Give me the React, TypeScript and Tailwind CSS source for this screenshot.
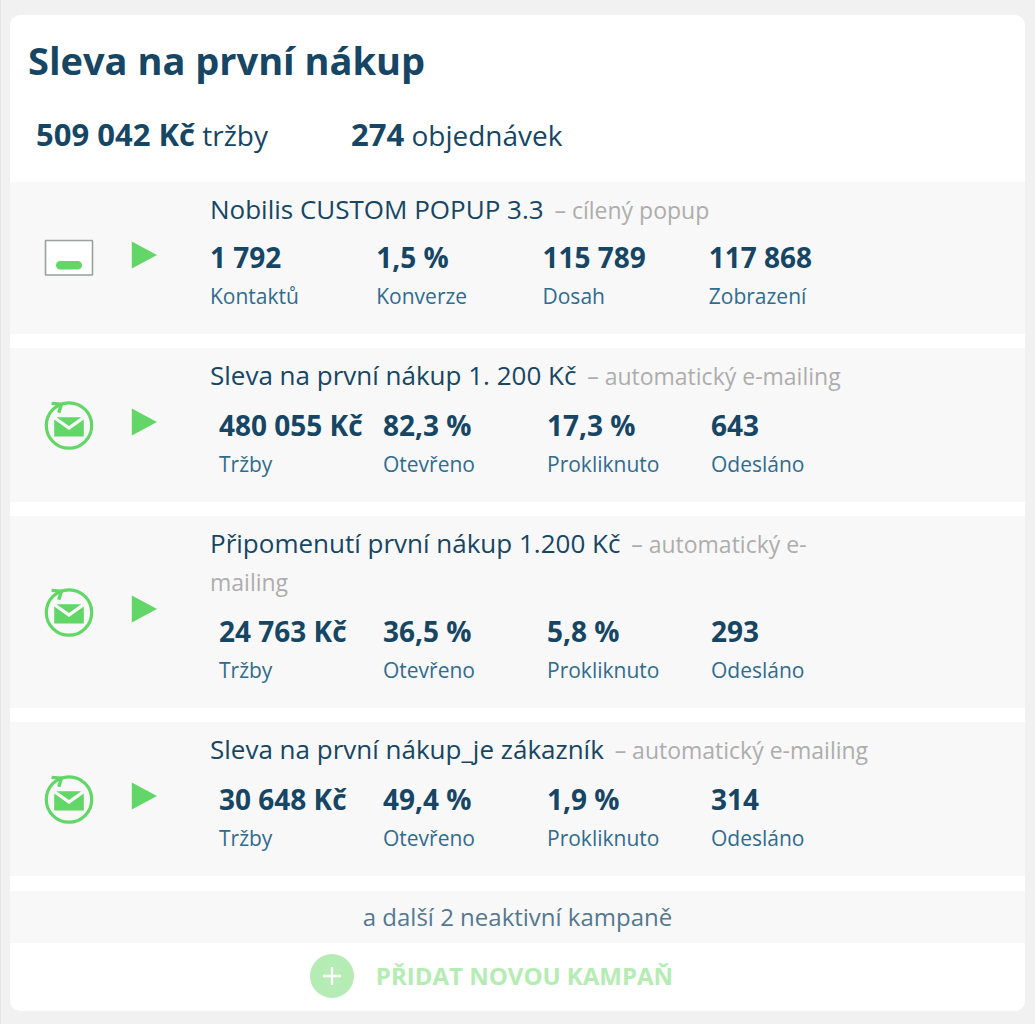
type CampaignType = "popup" | "email"

interface Stat {
  value: string
  label: string
}

interface Campaign {
  name: string
  kind: string
  type: CampaignType
  stats: Stat[]
}

const campaigns: Campaign[] = [
  {
    name: "Nobilis CUSTOM POPUP 3.3",
    kind: "cílený popup",
    type: "popup",
    stats: [
      { value: "1 792", label: "Kontaktů" },
      { value: "1,5 %", label: "Konverze" },
      { value: "115 789", label: "Dosah" },
      { value: "117 868", label: "Zobrazení" }
    ]
  },
  {
    name: "Sleva na první nákup 1. 200 Kč",
    kind: "automatický e-mailing",
    type: "email",
    stats: [
      { value: "480 055 Kč", label: "Tržby" },
      { value: "82,3 %", label: "Otevřeno" },
      { value: "17,3 %", label: "Prokliknuto" },
      { value: "643", label: "Odesláno" }
    ]
  },
  {
    name: "Připomenutí první nákup 1.200 Kč",
    kind: "automatický e-mailing",
    type: "email",
    stats: [
      { value: "24 763 Kč", label: "Tržby" },
      { value: "36,5 %", label: "Otevřeno" },
      { value: "5,8 %", label: "Prokliknuto" },
      { value: "293", label: "Odesláno" }
    ]
  },
  {
    name: "Sleva na první nákup_je zákazník",
    kind: "automatický e-mailing",
    type: "email",
    stats: [
      { value: "30 648 Kč", label: "Tržby" },
      { value: "49,4 %", label: "Otevřeno" },
      { value: "1,9 %", label: "Prokliknuto" },
      { value: "314", label: "Odesláno" }
    ]
  }
]

function PopupIcon() {
  return (
    <svg viewBox="0 0 50 38" className="w-[50px] h-[38px]" aria-hidden="true">
      <rect x="1.5" y="1.5" width="47" height="34.5" rx="0.5" fill="#fff" stroke="#9b9fa0" strokeWidth="1.6" />
      <rect x="12" y="22" width="26" height="8.6" rx="4.3" fill="#62d666" />
    </svg>
  )
}

function EmailIcon() {
  return (
    <svg viewBox="0 0 50 50" className="w-[50px] h-[50px]" fill="none" aria-hidden="true">
      <circle cx="25" cy="25.5" r="22.7" stroke="#62d666" strokeWidth="3.2" />
      <path d="M7.6 3.4 L17.4 4.2 L14.8 12.8" stroke="#62d666" strokeWidth="3.4" />
      <path d="M12.4 17.2 H37.2 L25 26 Z" fill="#62d666" />
      <path d="M10.2 19.6 L25 30 L39.8 19.6 V36.4 H10.2 Z" fill="#62d666" />
    </svg>
  )
}

function PlayIcon() {
  return (
    <svg viewBox="0 0 26 28" className="w-[26px] h-7" aria-hidden="true">
      <path d="M0.8 0.4 L26 14 L0.8 27.6 Z" fill="#62d666" />
    </svg>
  )
}

function CampaignRow({ campaign }: { campaign: Campaign }) {
  const isEmail = campaign.type === "email"

  return (
    <li className="flex items-center bg-[#f8f8f8] pt-2 pb-[18px] pl-[34px] pr-[150px]">
      <div className="shrink-0 w-[87px] pt-[10px]">
        {isEmail ? <EmailIcon /> : <PopupIcon />}
      </div>
      <div className="shrink-0 w-[79px] pt-1">
        <button type="button" aria-label="Spustit kampaň" className="block">
          <PlayIcon />
        </button>
      </div>
      <div className="flex-1 min-w-0">
        <h2 className="text-[26px] leading-[38px]">
          {campaign.name}{" "}
          <span className="ml-1 text-[23px] leading-none text-[#adadad]">– {campaign.kind}</span>
        </h2>
        <dl className={isEmail ? "grid grid-cols-4 mt-3 pl-[9px]" : "grid grid-cols-4 mt-[10px]"}>
          {campaign.stats.map((stat) => (
            <div key={stat.label} className="flex flex-col-reverse whitespace-nowrap">
              <dt className="text-[21px] leading-10 text-[#316b8d]">{stat.label}</dt>
              <dd className="text-[28px] leading-[38px] font-bold">{stat.value}</dd>
            </div>
          ))}
        </dl>
      </div>
    </li>
  )
}

export default function App() {
  return (
    <main className="min-h-screen bg-[#f1f1f1] border-l border-[#e5e5e5] pt-[15px] pb-[13px] pl-[9px] pr-[10px] font-['Open_Sans',sans-serif] text-[#164663]">
      <section className="bg-white rounded-[10px]">
        {/* Totals */}
        <header className="pt-[17px] pb-[25px] px-[18px]">
          <h1 className="text-[38px] leading-[56px] font-bold">Sleva na první nákup</h1>
          <div className="flex mt-6 pl-2 text-[28px] leading-[44px]">
            <p className="w-[315px]">
              <strong className="text-[31px]">509 042 Kč</strong> tržby
            </p>
            <p>
              <strong className="text-[31px]">274</strong> objednávek
            </p>
          </div>
        </header>

        <ul className="flex flex-col gap-[14px]">
          {campaigns.map((campaign) => (
            <CampaignRow key={campaign.name} campaign={campaign} />
          ))}
        </ul>

        <p className="mt-[15px] bg-[#f8f8f8] text-center text-[24px] leading-[52px] text-[#54788f]">
          a další 2 neaktivní kampaně
        </p>

        {/* Add campaign */}
        <div className="flex justify-center pt-[11px] pb-[13px] pr-[52px]">
          <button type="button" className="flex items-center gap-[22px] text-[24px] leading-[44px] font-bold text-[#b5ecb4]">
            <span className="flex items-center justify-center size-11 rounded-full bg-[#b5ecb4]">
              <svg viewBox="0 0 18 18" className="size-[18px]" aria-hidden="true">
                <path d="M9 0 V18 M0 9 H18" stroke="#fff" strokeWidth="2.4" />
              </svg>
            </span>
            PŘIDAT NOVOU KAMPAŇ
          </button>
        </div>
      </section>
    </main>
  )
}
